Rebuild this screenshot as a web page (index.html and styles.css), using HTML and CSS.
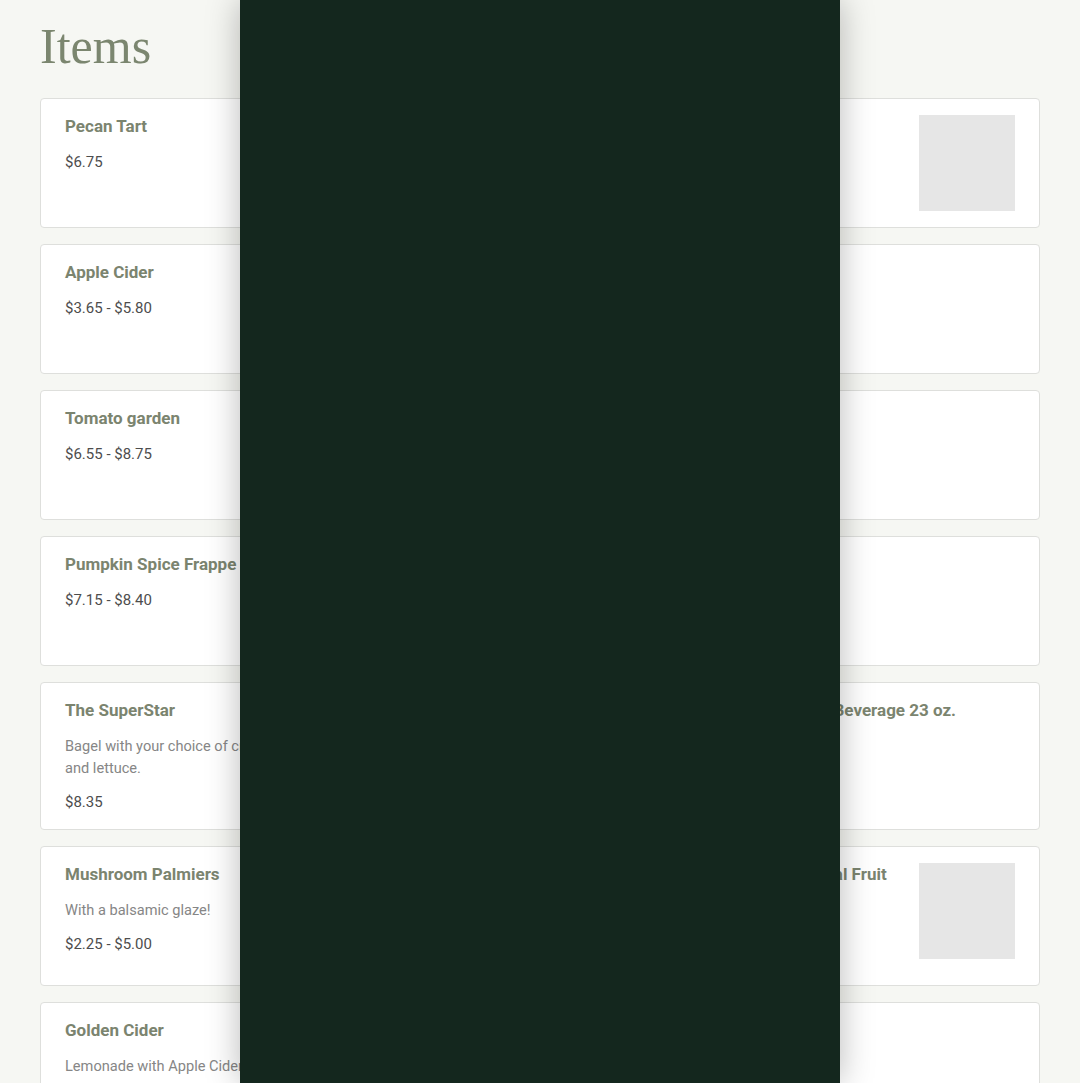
FILE: index.html
```html
<!DOCTYPE html>
<html lang="en">
<head>
    <meta charset="UTF-8">
    <meta name="viewport" content="width=device-width, initial-scale=1.0">
    <title>Items</title>
    <link rel="stylesheet" href="styles.css">
</head>
<body>

    <main class="page">
        <h1 class="page-title">Items</h1>

        <div class="items">
            <!-- row 1 -->
            <div class="card">
                <div class="card-text">
                    <h2 class="card-name">Pecan Tart</h2>
                    <p class="card-price">$6.75</p>
                </div>
            </div>
            <div class="card">
                <div class="card-text">
                    <h2 class="card-name">Pumpkin Bread</h2>
                    <p class="card-price">$4.25</p>
                </div>
                <div class="card-photo"></div>
            </div>

            <!-- row 2 -->
            <div class="card">
                <div class="card-text">
                    <h2 class="card-name">Apple Cider</h2>
                    <p class="card-price">$3.65 - $5.80</p>
                </div>
            </div>
            <div class="card">
                <div class="card-text">
                    <h2 class="card-name">Chai Latte</h2>
                    <p class="card-price">$4.95 - $6.15</p>
                </div>
            </div>

            <!-- row 3 -->
            <div class="card">
                <div class="card-text">
                    <h2 class="card-name">Tomato garden</h2>
                    <p class="card-price">$6.55 - $8.75</p>
                </div>
            </div>
            <div class="card">
                <div class="card-text">
                    <h2 class="card-name">Harvest Salad</h2>
                    <p class="card-price">$8.95</p>
                </div>
            </div>

            <!-- row 4 -->
            <div class="card">
                <div class="card-text">
                    <h2 class="card-name">Pumpkin Spice Frappe</h2>
                    <p class="card-price">$7.15 - $8.40</p>
                </div>
            </div>
            <div class="card">
                <div class="card-text">
                    <h2 class="card-name">Caramel Apple Latte</h2>
                    <p class="card-price">$5.45 - $6.70</p>
                </div>
            </div>

            <!-- row 5 -->
            <div class="card">
                <div class="card-text">
                    <h2 class="card-name">The SuperStar</h2>
                    <p class="card-desc">Bagel with your choice of cream cheese, tomato, cucumber<br>and lettuce.</p>
                    <p class="card-price">$8.35</p>
                </div>
            </div>
            <div class="card">
                <div class="card-text">
                    <h2 class="card-name">Sparkling Apple Cider Tall Bottled Beverage 23 oz.</h2>
                    <p class="card-price">$3.95</p>
                </div>
            </div>

            <!-- row 6 -->
            <div class="card">
                <div class="card-text">
                    <h2 class="card-name">Mushroom Palmiers</h2>
                    <p class="card-desc">With a balsamic glaze!</p>
                    <p class="card-price">$2.25 - $5.00</p>
                </div>
            </div>
            <div class="card card-tall">
                <div class="card-text">
                    <h2 class="card-name">Acai Berry Blast Smoothie with Real Fruit</h2>
                    <p class="card-desc">Strawberry banana.</p>
                    <p class="card-price">$6.25</p>
                </div>
                <div class="card-photo"></div>
            </div>

            <!-- row 7 -->
            <div class="card">
                <div class="card-text">
                    <h2 class="card-name">Golden Cider</h2>
                    <p class="card-desc">Lemonade with Apple Cider and a hint of ginger.</p>
                    <p class="card-price">$4.50</p>
                </div>
            </div>
            <div class="card">
                <div class="card-text">
                    <h2 class="card-name">Hot Cocoa</h2>
                    <p class="card-price">$3.75 - $4.95</p>
                </div>
            </div>
        </div>
    </main>

    <!-- side drawer over the list -->
    <aside class="drawer"></aside>

</body>
</html>
```

FILE: styles.css
```css
body {
    font-family: Roboto, "Liberation Sans", sans-serif;
    margin: 0;
    padding: 0;
    background-color: #f6f7f3;
    color: #4a4a4a;
}

.page {
    padding: 0 40px 40px;
}

.page-title {
    font-family: "Liberation Serif", serif;
    font-weight: normal;
    font-size: 50px;
    line-height: 56px;
    color: #7b866f;
    margin: 0;
    padding: 18px 0 24px;
}

.items {
    display: grid;
    grid-template-columns: 1fr 1fr;
    gap: 16px;
}

.card {
    display: flex;
    gap: 24px;
    min-height: 96px;
    padding: 16px 24px;
    background-color: #ffffff;
    border: 1px solid #dedfdc;
    border-radius: 4px;
}

.card-tall {
    min-height: 106px;
}

.card-text {
    flex: 1;
    min-width: 0;
}

.card-name {
    font-size: 17px;
    line-height: 22px;
    font-weight: 700;
    color: #7b846f;
    margin: 0 0 14px;
}

.card-desc {
    font-size: 14.6px;
    line-height: 22px;
    color: #868686;
    margin: 0 0 12px;
}

.card-price {
    font-size: 15px;
    line-height: 22px;
    color: #4d4d4d;
    margin: 0;
}

.card-photo {
    flex: none;
    width: 96px;
    height: 96px;
    background-color: #e6e6e6;
}

.drawer {
    position: fixed;
    top: 0;
    bottom: 0;
    left: 240px;
    width: 600px;
    background-color: #14271e;
    box-shadow: 0 0 32px rgba(0, 0, 0, 0.28);
}
```
